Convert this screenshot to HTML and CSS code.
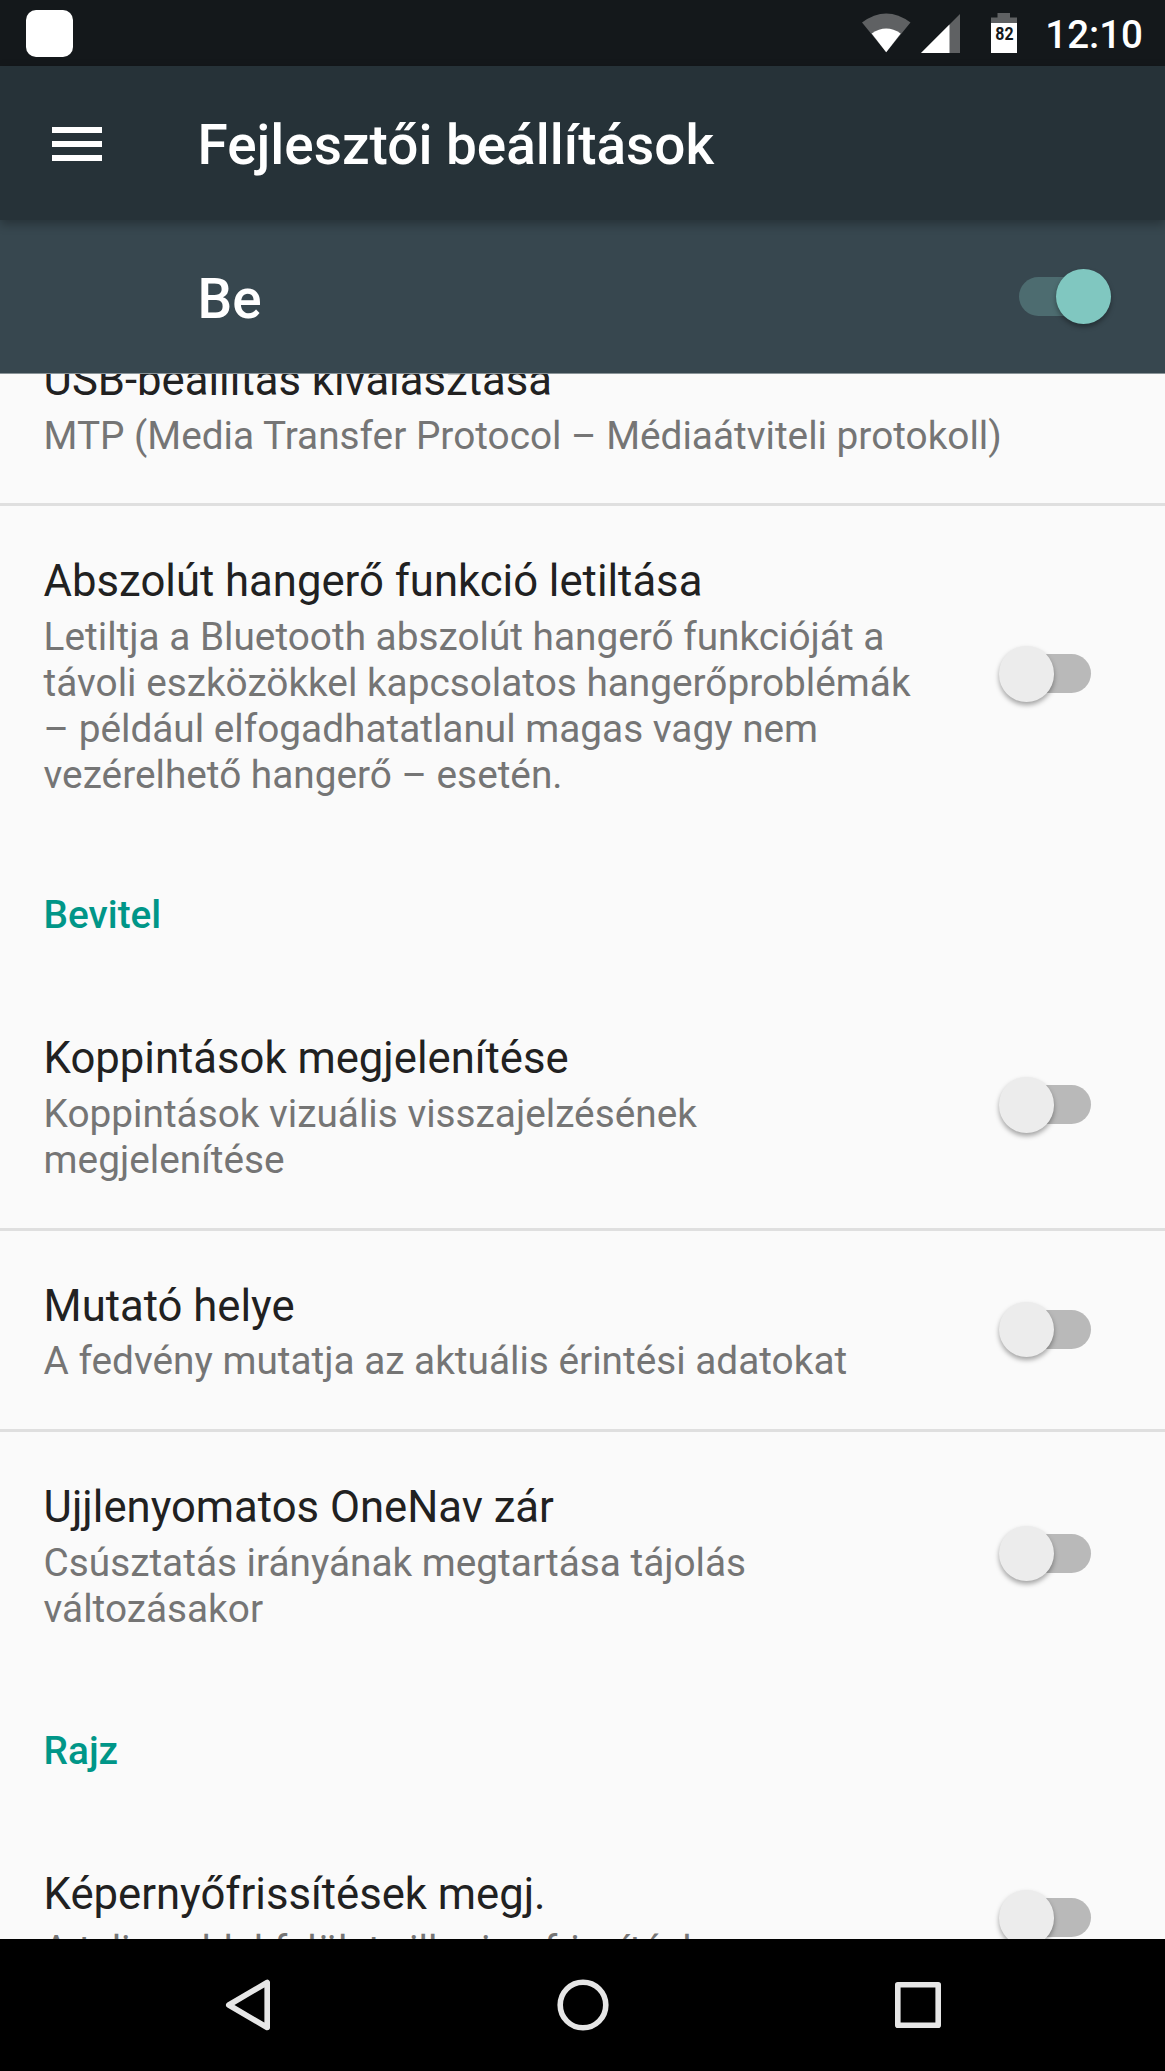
FILE: index.html
```html
<!DOCTYPE html>
<html lang="hu">

<head>
    <meta charset="UTF-8">
    <meta name="viewport" content="width=device-width, initial-scale=1.0">
    <title>Fejlesztői beállítások</title>
    <link rel="stylesheet" href="styles.css">
</head>

<body>

    <div class="status-bar">
        <span class="app-icon"></span>
        <svg class="wifi" width="49" height="40" viewBox="0 0 49 40">
            <path d="M0 9.500Q24.200 -8.500 48.500 9.500L24.200 39.300Z" fill="#5f6163" />
            <path d="M9.700 20.500Q24.200 10.500 38.700 20.500L24.200 39.300Z" fill="#fff" />
        </svg>
        <svg class="signal" width="39" height="39" viewBox="0 0 39 39">
            <path d="M39 0V39H0Z" fill="#5f6163" />
            <path d="M28.500 10.500V39H0Z" fill="#fff" />
        </svg>
        <div class="battery">
            <svg width="26" height="40" viewBox="0 0 26 40">
                <path d="M6.500 0H19V4.500H26V12H0V4.500H6.500Z" fill="#5f6163" />
                <path d="M0 10H26V40H0Z" fill="#fff" />
            </svg>
            <span>82</span>
        </div>
        <span class="clock">12:10</span>
    </div>

    <header class="toolbar">
        <div class="menu"><i></i><i></i><i></i></div>
        <h1>Fejlesztői beállítások</h1>
    </header>

    <div class="switch-bar">
        <h2>Be</h2>
        <span class="switch on"></span>
    </div>

    <main class="list">
        <div class="row first">
            <div class="text">
                <h3>USB-beállítás kiválasztása</h3>
                <p>MTP (Media Transfer Protocol – Médiaátviteli protokoll)</p>
            </div>
        </div>
        <div class="row last">
            <div class="text">
                <h3>Abszolút hangerő funkció letiltása</h3>
                <p>Letiltja a Bluetooth abszolút hangerő funkcióját a<br>távoli eszközökkel kapcsolatos hangerőproblémák<br>– például elfogadhatatlanul magas vagy nem<br>vezérelhető hangerő – esetén.</p>
            </div>
            <span class="switch"></span>
        </div>
        <div class="category">Bevitel</div>
        <div class="row">
            <div class="text">
                <h3>Koppintások megjelenítése</h3>
                <p>Koppintások vizuális visszajelzésének<br>megjelenítése</p>
            </div>
            <span class="switch"></span>
        </div>
        <div class="row">
            <div class="text">
                <h3>Mutató helye</h3>
                <p>A fedvény mutatja az aktuális érintési adatokat</p>
            </div>
            <span class="switch"></span>
        </div>
        <div class="row last">
            <div class="text">
                <h3>Ujjlenyomatos OneNav zár</h3>
                <p>Csúsztatás irányának megtartása tájolás<br>változásakor</p>
            </div>
            <span class="switch"></span>
        </div>
        <div class="category spaced">Rajz</div>
        <div class="row last">
            <div class="text">
                <h3>Képernyőfrissítések megj.</h3>
                <p>A teljes ablakfelület villogjon frissítéskor</p>
            </div>
            <span class="switch"></span>
        </div>
    </main>

    <nav class="nav-bar">
        <svg width="60" height="60" viewBox="0 0 60 60">
            <path d="M49.200 7.500V52.500L10.800 30Z" />
        </svg>
        <svg width="60" height="60" viewBox="0 0 60 60">
            <circle cx="30" cy="30" r="22.800" />
        </svg>
        <svg width="60" height="60" viewBox="0 0 60 60">
            <rect x="9.800" y="9.800" width="40.400" height="40.400" />
        </svg>
    </nav>

</body>

</html>
```
FILE: styles.css
```css
* {
    box-sizing: border-box;
}

body {
    margin: 0;
    height: 2071px;
    display: flex;
    flex-direction: column;
    overflow: hidden;
    background-color: #fafafa;
    font-family: Roboto, sans-serif;
}

h1,
h2,
h3,
p {
    margin: 0;
}

.status-bar {
    flex: none;
    height: 66px;
    display: flex;
    align-items: center;
    padding: 0 22px 0 26px;
    background-color: #14181b;
    color: #fff;
}

.app-icon {
    width: 47px;
    height: 47px;
    margin-right: auto;
    border-radius: 10px;
    background-color: #fff;
}

.signal {
    margin-left: 10px;
}

.battery {
    position: relative;
    height: 40px;
    margin-left: 31px;
}

.battery span {
    position: absolute;
    top: 11px;
    left: 0;
    width: 27px;
    text-align: center;
    font-size: 19px;
    line-height: 20px;
    font-weight: 700;
    color: #14181b;
    transform: scaleX(0.84);
}

.clock {
    margin-left: 28px;
    padding-top: 3px;
    font-size: 38.5px;
    font-weight: 500;
}

.toolbar {
    position: relative;
    z-index: 1;
    flex: none;
    height: 154px;
    display: flex;
    align-items: center;
    padding-left: 52px;
    background-color: #263238;
    color: #fff;
    box-shadow: 0 4px 10px rgba(0, 0, 0, 0.3);
}

.menu {
    width: 50px;
    display: flex;
    flex-direction: column;
    gap: 8px;
    margin-right: 95.5px;
    padding-top: 1px;
}

.menu i {
    height: 6px;
    background-color: #fff;
}

h1,
h2 {
    padding-top: 4px;
    font-size: 54.9px;
    font-weight: 500;
    line-height: 64px;
}

.switch-bar {
    flex: none;
    height: 153px;
    display: flex;
    align-items: center;
    justify-content: space-between;
    padding: 0 54px 0 197.5px;
    background-color: #37474f;
    color: #fff;
}

.switch {
    position: relative;
    flex: none;
    width: 92.5px;
    height: 56px;
}

.switch::before {
    content: "";
    position: absolute;
    top: 8px;
    left: 10px;
    right: 0;
    height: 39px;
    border-radius: 20px;
    background-color: #b9b9b9;
}

.switch::after {
    content: "";
    position: absolute;
    top: 0;
    left: 0;
    width: 55.5px;
    height: 55.5px;
    border-radius: 50%;
    background-color: #ececec;
    box-shadow: 0 3px 5px rgba(0, 0, 0, 0.35);
}

.switch.on::before {
    left: 0;
    background-color: #4d6c70;
}

.switch.on::after {
    left: 37px;
    background-color: #80c7c0;
}

.list {
    flex: 1;
    min-height: 0;
    overflow: hidden;
    border-top: 1px solid #8a9498;
}

.row {
    display: flex;
    align-items: center;
    justify-content: space-between;
    padding: 46px 73.7px 44.2px 43.6px;
    border-bottom: 3px solid #dfdfdf;
}

.row.first {
    margin-top: -69.2px;
}

.row.last {
    border-bottom: 0;
}

.row .switch {
    margin-top: -2px;
}

h3 {
    margin-bottom: 1.8px;
    font-size: 43.65px;
    font-weight: 400;
    line-height: 60px;
    color: #212121;
}

p {
    font-size: 38.78px;
    line-height: 46.2px;
    color: #757575;
    white-space: nowrap;
}

.category {
    height: 140.5px;
    padding: 49.6px 43.6px 0;
    font-size: 38.78px;
    line-height: 46.2px;
    font-weight: 500;
    color: #009688;
}

.category.spaced {
    margin-top: 2.5px;
}

.nav-bar {
    flex: none;
    height: 132px;
    display: flex;
    align-items: center;
    justify-content: center;
    gap: 275px;
    padding-left: 1px;
    background-color: #000;
}

.nav-bar svg {
    fill: none;
    stroke: #e6e6e6;
    stroke-width: 5.6;
    stroke-linejoin: round;
}
```
